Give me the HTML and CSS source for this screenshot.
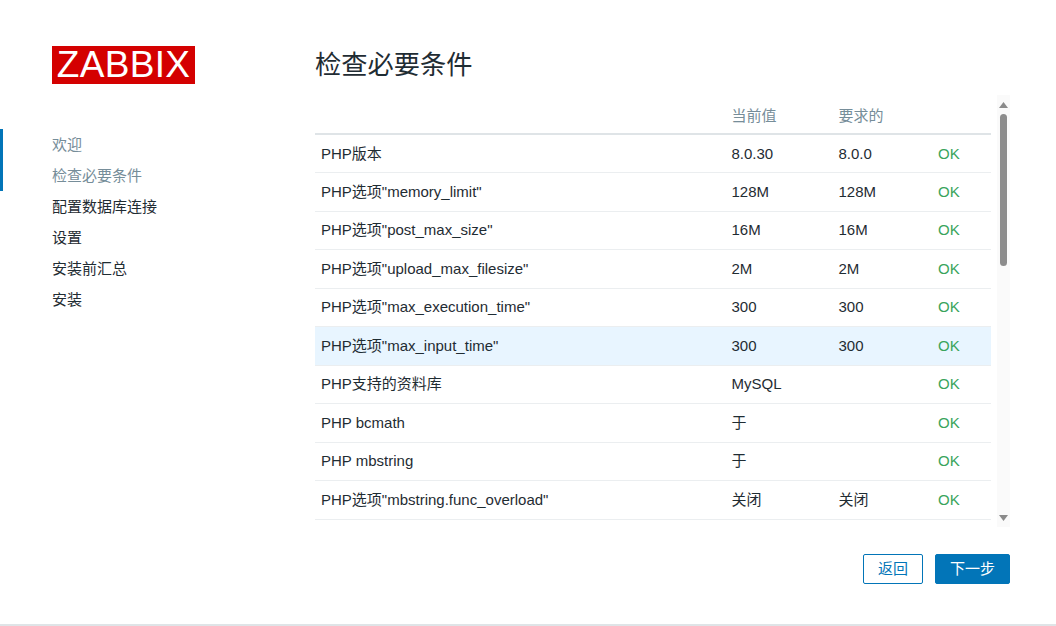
FILE: index.html
```html
<!DOCTYPE html>
<html lang="zh">
<head>
<meta charset="utf-8">
<title>Zabbix</title>
<link rel="stylesheet" href="styles.css">
</head>
<body>
<div class="page">
  <aside class="sidebar">
    <div class="logo">ZABBIX</div>
    <ul class="steps">
      <li class="step done">欢迎</li>
      <li class="step done">检查必要条件</li>
      <li class="step">配置数据库连接</li>
      <li class="step">设置</li>
      <li class="step">安装前汇总</li>
      <li class="step">安装</li>
    </ul>
  </aside>
  <main class="content">
    <h1 class="title">检查必要条件</h1>
    <div class="scroll-area">
      <div class="table-clip">
        <table class="checks">
          <thead>
            <tr><th></th><th>当前值</th><th>要求的</th><th></th></tr>
          </thead>
          <tbody>
            <tr><td>PHP版本</td><td>8.0.30</td><td>8.0.0</td><td class="ok">OK</td></tr>
            <tr><td>PHP选项"memory_limit"</td><td>128M</td><td>128M</td><td class="ok">OK</td></tr>
            <tr><td>PHP选项"post_max_size"</td><td>16M</td><td>16M</td><td class="ok">OK</td></tr>
            <tr><td>PHP选项"upload_max_filesize"</td><td>2M</td><td>2M</td><td class="ok">OK</td></tr>
            <tr><td>PHP选项"max_execution_time"</td><td>300</td><td>300</td><td class="ok">OK</td></tr>
            <tr class="hovered"><td>PHP选项"max_input_time"</td><td>300</td><td>300</td><td class="ok">OK</td></tr>
            <tr><td>PHP支持的资料库</td><td>MySQL</td><td></td><td class="ok">OK</td></tr>
            <tr><td>PHP bcmath</td><td>于</td><td></td><td class="ok">OK</td></tr>
            <tr><td>PHP mbstring</td><td>于</td><td></td><td class="ok">OK</td></tr>
            <tr><td>PHP选项"mbstring.func_overload"</td><td>关闭</td><td>关闭</td><td class="ok">OK</td></tr>
          </tbody>
        </table>
      </div>
      <div class="scrollbar">
        <svg class="arrow" width="9" height="6" viewBox="0 0 9 6"><path d="M4.5 0L9 6H0z"/></svg>
        <div class="track"><div class="thumb"></div></div>
        <svg class="arrow" width="9" height="6" viewBox="0 0 9 6"><path d="M0 0H9L4.5 6z"/></svg>
      </div>
    </div>
    <div class="actions">
      <button class="btn btn-alt">返回</button>
      <button class="btn btn-primary">下一步</button>
    </div>
  </main>
</div>
</body>
</html>
```
FILE: styles.css
```css
* { box-sizing: border-box; }
html, body { margin: 0; padding: 0; }
body {
  background: #fff;
  color: #1f2c33;
  font-family: "Liberation Sans", "Noto Sans CJK SC", sans-serif;
  font-size: 15px;
  overflow: hidden;
}
.page {
  display: flex;
  height: 626px;
  border-bottom: 2px solid #dfe4e7;
}
.sidebar { width: 315px; flex: none; padding: 46px 0 0; }
.logo {
  width: 143px;
  height: 38px;
  margin-left: 52px;
  background: #d40000;
  color: #fff;
  font-size: 37px;
  line-height: 38px;
  letter-spacing: 0.3px;
  text-align: center;
}
.steps {
  list-style: none;
  margin: 45px 0 0;
  padding: 0;
  position: relative;
}
.steps::before {
  content: "";
  position: absolute;
  left: 0;
  top: 0;
  width: 3px;
  height: 62px;
  background: #0275b8;
}
.step { height: 31px; line-height: 31px; padding-left: 52px; }
.step.done { color: #768d99; }
.content { flex: 1; min-width: 0; }
.title {
  margin: 0;
  padding-top: 47px;
  height: 95px;
  font-size: 26.25px;
  line-height: 36px;
  font-weight: 400;
}
.scroll-area { display: flex; height: 432px; }
.table-clip { width: 676px; height: 425px; flex: none; overflow: hidden; }
.checks { width: 676px; border-collapse: collapse; table-layout: fixed; }
.checks th:nth-child(1) { width: 410.5px; }
.checks th:nth-child(2) { width: 107px; }
.checks th:nth-child(3) { width: 99.5px; }
.checks th {
  height: 39px;
  padding: 0 6px;
  color: #768d99;
  font-weight: 400;
  text-align: left;
  border-bottom: 2px solid #dfe4e7;
}
.checks td {
  height: 38.5px;
  padding: 9.5px 6px 0;
  line-height: 18px;
  vertical-align: top;
  border-bottom: 1px solid #ebeef0;
}
.hovered td { background: #e8f5ff; }
.ok { color: #3aa45b; }
.scrollbar {
  width: 13px;
  margin-left: 6px;
  background: #fafafa;
  display: flex;
  flex-direction: column;
  align-items: center;
  padding: 7px 0 6px;
}
.arrow { fill: #8a8a8a; flex: none; display: block; }
.track { flex: 1; width: 7px; padding-top: 6px; }
.thumb { width: 7px; height: 152px; border-radius: 4px; background: #8c8c8c; }
.actions {
  display: flex;
  justify-content: flex-end;
  gap: 12px;
  width: 695px;
  padding-top: 27px;
}
.btn {
  height: 30px;
  padding: 0;
  border-radius: 2px;
  border: 1px solid #0275b8;
  font: inherit;
  line-height: 28px;
}
.btn-alt { width: 60px; background: #fff; color: #0275b8; }
.btn-primary { width: 75px; background: #0275b8; color: #fff; }
```
